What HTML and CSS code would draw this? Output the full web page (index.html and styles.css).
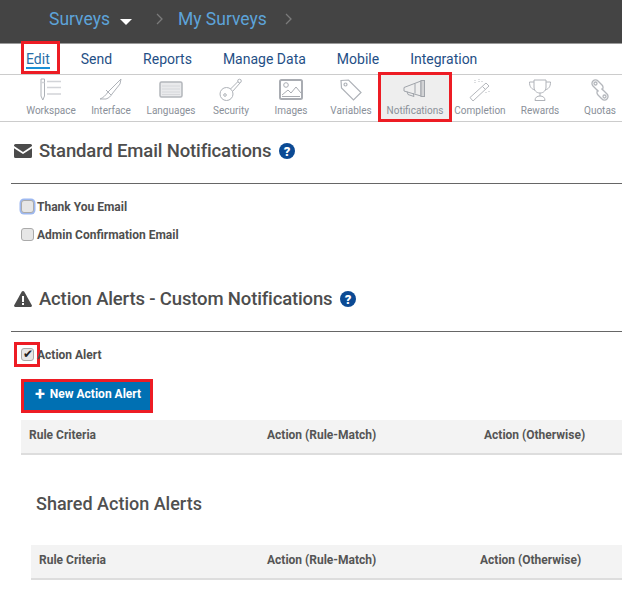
FILE: index.html
```html
<!DOCTYPE html>
<html>
	<head>
		<meta charset="UTF-8">
		<title>Notifications</title>
		<link rel="stylesheet" href="styles.css">
	</head>
	<body>
		<div class="topbar">
			<a class="crumb">Surveys</a>
			<span class="caret"></span>
			<svg class="chev chev1" width="7" height="12" viewBox="0 0 7 12"><path d="M1 1l5 5-5 5" fill="none" stroke="#7b7b7b" stroke-width="1.3"/></svg>
			<a class="crumb">My Surveys</a>
			<svg class="chev chev2" width="7" height="12" viewBox="0 0 7 12"><path d="M1 1l5 5-5 5" fill="none" stroke="#7b7b7b" stroke-width="1.3"/></svg>
		</div>

		<ul class="nav">
			<li class="navItem on"><a>Edit</a></li>
			<li class="navItem"><a>Send</a></li>
			<li class="navItem"><a>Reports</a></li>
			<li class="navItem"><a>Manage Data</a></li>
			<li class="navItem"><a>Mobile</a></li>
			<li class="navItem"><a>Integration</a></li>
		</ul>

		<ul class="tools">
			<li class="tool">
				<svg width="24" height="24" viewBox="0 0 24 24" fill="none" stroke="#aeb2b8"><path d="M2 1h3.500v17L3.800 22 2 18z"/><path d="M2 4.500h3.500M8 3.500h14M8 9.500h14M8 16h14" stroke="#d2d4d8" stroke-width="1.400"/></svg>
				<span>Workspace</span>
			</li>
			<li class="tool">
				<svg width="24" height="24" viewBox="0 0 24 24" fill="none" stroke="#aeb2b8"><path d="M22 1L9 14c-2 3-5 6-8 7h6c3-1 5-3 6-5l8-10z"/><path d="M7 12l5 5"/></svg>
				<span>Interface</span>
			</li>
			<li class="tool">
				<svg width="24" height="24" viewBox="0 0 24 24" fill="none" stroke="#b3b6bb"><rect x="1" y="4" width="22" height="15" rx="1.500" fill="#e9eaec" stroke-width="1.500"/><path d="M3.500 8h17M3.500 11h17M3.500 14h17M3.500 16.500h17" stroke="#c4c6ca" stroke-dasharray="1 1"/></svg>
				<span>Languages</span>
			</li>
			<li class="tool">
				<svg width="24" height="24" viewBox="0 0 24 24" fill="none" stroke="#aeb2b8"><circle cx="7.500" cy="16" r="6.500"/><circle cx="6" cy="17" r="1.300"/><path d="M11.500 11L19 3.500M13.500 13.500L21 5"/><circle cx="20.500" cy="3" r="1.800"/></svg>
				<span>Security</span>
			</li>
			<li class="tool">
				<svg width="24" height="24" viewBox="0 0 24 24" fill="none" stroke="#a9acb2"><rect x="1" y="2" width="22" height="19" rx="1.500" stroke-width="2"/><circle cx="7" cy="7" r="2.300"/><path d="M3 17l6-5 3 3 5-6 5 6M3 18.500h18"/></svg>
				<span>Images</span>
			</li>
			<li class="tool">
				<svg width="24" height="24" viewBox="0 0 24 24" fill="none" stroke="#aeb2b8" stroke-width="1.200"><path d="M2 2.500l7.500-.5L22 14.500 14.500 22 2.500 10z"/><circle cx="6.500" cy="6.500" r="1.500"/></svg>
				<span>Variables</span>
			</li>
			<li class="tool toolOn">
				<svg width="24" height="24" viewBox="0 0 24 24" fill="none" stroke="#a0a4aa"><path d="M1 9.500l17-6.500v15L1 13z"/><path d="M4 13.500l1 3 6 2-1-3.500"/><path d="M12 5.500v10"/><rect x="18" y="2.500" width="3.500" height="16" fill="#d2d3d5"/></svg>
				<span>Notifications</span>
			</li>
			<li class="tool">
				<svg width="24" height="24" viewBox="0 0 24 24" fill="none" stroke="#b4b7bc"><path d="M2 19.500L18 5l3 3L5 23z"/><path d="M14.500 8.500l3 3"/><path d="M7 2v3M11 1v3M14 3v2M21 13v2M18 14v1" stroke="#ced0d4" stroke-width="1.400" stroke-dasharray="1 1"/></svg>
				<span>Completion</span>
			</li>
			<li class="tool">
				<svg width="24" height="24" viewBox="0 0 24 24" fill="none" stroke="#b0b3b9"><path d="M6 2h12v7c0 3-2 6-6 6s-6-3-6-6z"/><path d="M6 4H1.500c0 5 2 7 5.500 8M18 4h4.500c0 5-2 7-5.500 8"/><path d="M12 15v3M7 22.500c0-3 2-4.500 5-4.500s5 1.500 5 4.500z"/></svg>
				<span>Rewards</span>
			</li>
			<li class="tool">
				<svg width="24" height="24" viewBox="0 0 24 24" fill="none" stroke="#b4b7bc" stroke-width="1.300"><path d="M10.500 13.500L5 8a3.500 3.500 0 0 1 0-5 3.500 3.500 0 0 1 5 0l4 4a3.500 3.500 0 0 1 0 5"/><path d="M13.500 10.500L19 16a3.500 3.500 0 0 1 0 5 3.500 3.500 0 0 1-5 0l-4-4a3.500 3.500 0 0 1 0-5"/><circle cx="7.500" cy="5.500" r="1.500"/><circle cx="16.500" cy="18.500" r="1.500"/></svg>
				<span>Quotas</span>
			</li>
		</ul>

		<div class="section">
			<h2 class="title">
				<svg class="titleIcon" width="18" height="14" viewBox="0 0 18 14"><path d="M1.500 0h15A1.500 1.500 0 0 1 18 1.500v.6L9 8 0 2.100v-.6A1.500 1.500 0 0 1 1.500 0z" fill="#4b4b4b"/><path d="M0 4.300L9 10l9-5.700v8.200a1.500 1.500 0 0 1-1.500 1.500h-15A1.500 1.500 0 0 1 0 12.500z" fill="#4b4b4b"/></svg>
				Standard Email Notifications
				<svg class="help" width="16" height="16" viewBox="0 0 16 16"><circle cx="8" cy="8" r="8" fill="#0b4a94"/><text x="8" y="12.500" text-anchor="middle" class="helpQ">?</text></svg>
			</h2>
			<div class="rule"></div>
			<label class="check first"><input type="checkbox" class="focused"> Thank You Email</label>
			<label class="check"><input type="checkbox"> Admin Confirmation Email</label>
		</div>

		<div class="section second">
			<h2 class="title">
				<svg class="titleIcon" width="18" height="16" viewBox="0 0 18 16"><path d="M9 0c.6 0 1 .3 1.300.8l7.500 13.400c.4.800-.1 1.800-1 1.800H1.200c-.9 0-1.400-1-1-1.800L7.700.8C8 .3 8.400 0 9 0z" fill="#4b4b4b"/><rect x="8" y="5" width="2" height="6" fill="#fff"/><rect x="8" y="12" width="2" height="2" fill="#fff"/></svg>
				Action Alerts - Custom Notifications
				<svg class="help" width="16" height="16" viewBox="0 0 16 16"><circle cx="8" cy="8" r="8" fill="#0b4a94"/><text x="8" y="12.500" text-anchor="middle" class="helpQ">?</text></svg>
			</h2>
			<div class="rule"></div>
			<label class="check alert"><span class="checkBox"><input type="checkbox" checked></span> Action Alert</label>
			<div class="btnBox"><a class="btn"><span class="plus">+</span> New Action Alert</a></div>
			<div class="thead t1">
				<span>Rule Criteria</span>
				<span>Action (Rule-Match)</span>
				<span>Action (Otherwise)</span>
			</div>
			<h3 class="shared">Shared Action Alerts</h3>
			<div class="thead t2">
				<span>Rule Criteria</span>
				<span>Action (Rule-Match)</span>
				<span>Action (Otherwise)</span>
			</div>
		</div>
	</body>
</html>
```

FILE: styles.css
```css
body,
ul,
li,
h2,
h3 {
	margin: 0;
	padding: 0;
	list-style: none;
}
body {
	width: 622px;
	height: 593px;
	overflow: hidden;
	background: #fff;
	font-family: Roboto, "Noto Sans", sans-serif;
	color: #4a4a4a;
}
.topbar {
	height: 38px;
	padding: 0 0 5px 49px;
	background: #444;
	border-bottom: 1px solid #9a9a9a;
	display: flex;
	align-items: center;
}
.crumb {
	font-size: 17.5px;
	color: #5da3d9;
}
.caret {
	width: 0;
	height: 0;
	margin: 5px 0 0 10px;
	border-left: 6px solid transparent;
	border-right: 6px solid transparent;
	border-top: 6px solid #fff;
}
.chev1 {
	margin: 0 15px 0 24px;
}
.chev2 {
	margin-left: 18px;
}
.nav {
	height: 29px;
	padding: 0 0 1px 26px;
	display: flex;
	align-items: center;
	gap: 31px;
	border-bottom: 1px solid #ccc;
}
.navItem {
	font-size: 14px;
	color: #1f4f86;
}
.navItem.on {
	position: relative;
	color: #2a6ea8;
}
.navItem.on a {
	border-bottom: 2px solid #1b8fd6;
}
.navItem.on::after {
	content: "";
	position: absolute;
	left: -5px;
	right: -10px;
	top: -10px;
	bottom: -7px;
	border: 3px solid #ed1c24;
}
.tools {
	height: 46px;
	display: flex;
	padding-left: 21px;
	border-bottom: 1px solid #ccc;
}
.tool {
	flex: none;
	width: 60px;
	display: flex;
	flex-direction: column;
	align-items: center;
	padding-top: 3px;
	font-size: 10px;
	color: #8a9099;
	white-space: nowrap;
}
.tool span {
	margin-top: 3px;
}
.toolOn {
	box-sizing: border-box;
	width: 74px;
	height: 50px;
	margin: -3px -2px 0 -3px;
	padding-top: 3px;
	background: #eee;
	border: 3px solid #ed1c24;
}
.section {
	padding-left: 11px;
}
.title {
	display: flex;
	align-items: center;
	font-size: 18.5px;
	font-weight: 500;
	letter-spacing: -0.15px;
	padding: 16px 0 0 3px;
	height: 26px;
	color: #4d4d4d;
}
.titleIcon {
	margin-right: 7px;
}
.help {
	margin-left: 8px;
}
.helpQ {
	fill: #fff;
	font-size: 13px;
	font-weight: 900;
}
.rule {
	height: 1px;
	background: #666;
	margin-top: 19px;
}
.check {
	display: flex;
	align-items: center;
	margin: 14px 0 0 10px;
	font-size: 12px;
	font-weight: 700;
	color: #4f4f4f;
	height: 14px;
}
.check input {
	appearance: none;
	box-sizing: border-box;
	width: 13px;
	height: 13px;
	margin: 0 3px 2px 0;
	border: 1px solid #aaa;
	border-radius: 3px;
	background: #e6e6e6;
	display: flex;
	align-items: center;
	justify-content: center;
}
.check input:checked::after {
	content: "\2714";
	font-size: 12px;
	line-height: 1;
	color: #222;
}
.check input.focused {
	box-shadow: 0 0 0 1.5px #9db8f0;
}
.first {
	margin-top: 16px;
}
.second {
	margin-top: 28px;
}
.alert {
	margin-top: 16px;
}
.checkBox {
	display: flex;
	margin: 0 -3px 2px -7px;
	padding: 3px 3px 3px 4px;
	border: 3px solid #ed1c24;
}
.check .checkBox input {
	margin: 0;
}
.btnBox {
	margin: 17px 0 0 10px;
}
.btn {
	display: inline-flex;
	align-items: center;
	box-sizing: border-box;
	width: 132px;
	height: 34px;
	padding: 0 0 4px 11px;
	background: #0070b3;
	border: 3px solid #ed1c24;
	color: #fff;
	font-size: 12px;
	font-weight: 700;
	white-space: nowrap;
}
.plus {
	font-size: 18px;
	margin-right: 5px;
	line-height: 1;
}
.thead {
	display: grid;
	align-items: center;
	height: 29px;
	padding-bottom: 4px;
	background: #f3f3f3;
	border-bottom: 2px solid #ddd;
	font-size: 12px;
	font-weight: 700;
	color: #555;
}
.t1 {
	margin: 7px 0 0 10px;
	padding-left: 8px;
	grid-template-columns: 238px 217px 1fr;
}
.t2 {
	margin-left: 20px;
	padding-left: 8px;
	grid-template-columns: 228px 213px 1fr;
}
.shared {
	margin: 38px 0 26px 25px;
	height: 26px;
	font-size: 18px;
	font-weight: 500;
	color: #505050;
}
```
